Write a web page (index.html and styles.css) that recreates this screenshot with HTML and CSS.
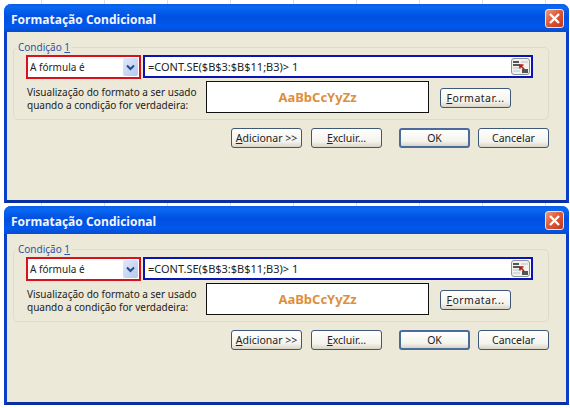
FILE: index.html
```html
<!DOCTYPE html>
<html lang="pt">
<head>
  <meta charset="UTF-8">
  <title>Formatação Condicional</title>
  <link rel="stylesheet" href="styles.css">
</head>
<body>

  <div class="window">
    <div class="title-bar">
      <span class="title">Formatação Condicional</span>
      <span class="close"><svg width="13" height="13" viewBox="0 0 13 13"><path d="M2 2 L11 11 M11 2 L2 11" stroke="#fff" stroke-width="2.4" fill="none"/></svg></span>
    </div>
    <div class="content">
      <fieldset class="group">
        <legend>Condição <u>1</u></legend>
        <div class="row">
          <div class="combo"><span class="combo-text">A fórmula é</span><span class="arrow"><svg width="9" height="7" viewBox="0 0 9 7"><path d="M1 1.5 L4.5 5 L8 1.5" stroke="#2b4a8c" stroke-width="2" fill="none"/></svg></span></div>
          <div class="formula"><span class="formula-text">=CONT.SE($B$3:$B$11;B3)&gt; 1</span><span class="ref-button"><svg width="17" height="13" viewBox="0 0 17 13"><path d="M1 2 H7 M1 5 H8 M10 10 H16 M10 12 H16" stroke="#222" stroke-width="1.6"/><path d="M9 2 H16 M1 8 H8 M1 11 H8" stroke="#b9c2cc" stroke-width="1"/><path d="M8 5 L12 9 M8 5 V8.5 M8 5 H11.5" stroke="#b01818" stroke-width="1.6" fill="none"/></svg></span></div>
        </div>
        <div class="row preview-row">
          <div class="preview-label">Visualização do formato a ser usado<br>quando a condição for verdadeira:</div>
          <div class="preview">AaBbCcYyZz</div>
          <button class="button format"><u>F</u>ormatar...</button>
        </div>
      </fieldset>
      <div class="actions">
        <button class="button"><u>A</u>dicionar &gt;&gt;</button>
        <button class="button"><u>E</u>xcluir...</button>
        <button class="button default ok">OK</button>
        <button class="button">Cancelar</button>
      </div>
    </div>
  </div>

  <div class="window">
    <div class="title-bar">
      <span class="title">Formatação Condicional</span>
      <span class="close"><svg width="13" height="13" viewBox="0 0 13 13"><path d="M2 2 L11 11 M11 2 L2 11" stroke="#fff" stroke-width="2.4" fill="none"/></svg></span>
    </div>
    <div class="content">
      <fieldset class="group">
        <legend>Condição <u>1</u></legend>
        <div class="row">
          <div class="combo"><span class="combo-text">A fórmula é</span><span class="arrow"><svg width="9" height="7" viewBox="0 0 9 7"><path d="M1 1.5 L4.5 5 L8 1.5" stroke="#2b4a8c" stroke-width="2" fill="none"/></svg></span></div>
          <div class="formula"><span class="formula-text">=CONT.SE($B$3:$B$11;B3)&gt; 1</span><span class="ref-button"><svg width="17" height="13" viewBox="0 0 17 13"><path d="M1 2 H7 M1 5 H8 M10 10 H16 M10 12 H16" stroke="#222" stroke-width="1.6"/><path d="M9 2 H16 M1 8 H8 M1 11 H8" stroke="#b9c2cc" stroke-width="1"/><path d="M8 5 L12 9 M8 5 V8.5 M8 5 H11.5" stroke="#b01818" stroke-width="1.6" fill="none"/></svg></span></div>
        </div>
        <div class="row preview-row">
          <div class="preview-label">Visualização do formato a ser usado<br>quando a condição for verdadeira:</div>
          <div class="preview">AaBbCcYyZz</div>
          <button class="button format"><u>F</u>ormatar...</button>
        </div>
      </fieldset>
      <div class="actions">
        <button class="button"><u>A</u>dicionar &gt;&gt;</button>
        <button class="button"><u>E</u>xcluir...</button>
        <button class="button default ok">OK</button>
        <button class="button">Cancelar</button>
      </div>
    </div>
  </div>

</body>
</html>
```

FILE: styles.css
```css
body {
  margin: 0;
  height: 408px;
  box-sizing: border-box;
  padding: 4px 0 0 4px;
  overflow: hidden;
  background-color: #fff;
  background-image: repeating-linear-gradient(90deg, #fff 0, #fff 41px, #dcdcdc 41px, #dcdcdc 42px, #fff 42px, #fff 63px);
  background-size: 100% 206px;
  background-repeat: no-repeat;
  font-family: "Noto Sans", sans-serif;
  font-size: 10px;
  color: #222;
}
.window {
  box-sizing: border-box;
  width: 565px;
  height: 199px;
  margin-bottom: 3px;
  border: 3px solid #0a3fc8;
  border-top: none;
  border-bottom-color: #0a2f9e;
  border-radius: 7px 7px 0 0;
  background-color: #ece9d8;
  display: flex;
  flex-direction: column;
}
.title-bar {
  height: 28px;
  margin: 0 -3px;
  padding: 0 5px 0 7px;
  flex-shrink: 0;
  border-radius: 7px 7px 0 0;
  background: linear-gradient(180deg, #0a5ee8 0, #0a68f2 12%, #0050e0 45%, #0058ee 80%, #0a4cc8 100%);
  display: flex;
  align-items: center;
  justify-content: space-between;
}
.title {
  margin-top: 3px;
  font-family: "Open Sans", sans-serif;
  font-weight: 700;
  font-size: 12px;
  color: #f2f6ff;
}
.close {
  width: 19px;
  height: 19px;
  box-sizing: border-box;
  border: 1px solid #f3e4dc;
  border-radius: 3px;
  background: linear-gradient(135deg, #ec9a80 0, #dd5a38 45%, #bf3a1c 100%);
  display: flex;
  align-items: center;
  justify-content: center;
}
.content {
  padding: 8px 17px 0 6px;
}
.group {
  margin: 0;
  padding: 1px 15px 0 12px;
  height: 80px;
  box-sizing: border-box;
  border: 1px solid #dedbcc;
  border-radius: 5px;
}
legend {
  margin-left: -10px;
  padding: 0 2px;
  line-height: 14px;
  color: #2a55a8;
}
.row {
  display: flex;
  gap: 2px;
}
.combo {
  box-sizing: border-box;
  width: 115px;
  height: 24px;
  padding: 0 1px 0 2px;
  border: 2px solid #d8121c;
  background-color: #fff;
  display: flex;
  align-items: center;
  justify-content: space-between;
}
.arrow {
  width: 15px;
  height: 18px;
  border-radius: 2px;
  background: linear-gradient(135deg, #dfe9fb, #b4c9ef);
  display: flex;
  align-items: center;
  justify-content: center;
}
.formula {
  box-sizing: border-box;
  width: 390px;
  height: 23px;
  padding: 0 1px 0 3px;
  border: 2px solid #0a14b4;
  background-color: #fff;
  font-size: 11px;
  display: flex;
  align-items: center;
  justify-content: space-between;
}
.ref-button {
  box-sizing: border-box;
  width: 19px;
  height: 17px;
  border: 1px solid #8a93a0;
  border-radius: 3px;
  background-color: #f3f2ea;
  display: flex;
  align-items: center;
  justify-content: center;
}
.preview-row {
  margin-top: 2px;
  gap: 0;
}
.preview-label {
  width: 180px;
  padding: 5px 0 0 1px;
  box-sizing: border-box;
  line-height: 13px;
  white-space: nowrap;
}
.preview {
  box-sizing: border-box;
  width: 223px;
  height: 32px;
  border: 1px solid #111;
  background-color: #fff;
  font-weight: 700;
  font-size: 13px;
  color: #dd8f3d;
  display: flex;
  align-items: center;
  justify-content: center;
}
.button {
  box-sizing: border-box;
  width: 71px;
  height: 20px;
  padding: 0;
  border: 1px solid #3d5878;
  border-radius: 3px;
  background: linear-gradient(180deg, #fff 0, #f4f3ec 70%, #d8d4c6 100%);
  font-family: "Noto Sans", sans-serif;
  font-size: 10.5px;
  color: #222;
}
.format {
  margin: 7px 0 0 11px;
  letter-spacing: 0.5px;
}
.default {
  border-width: 2px;
  border-color: #4a6c9c;
}
.actions {
  margin-top: 8px;
  display: flex;
  justify-content: flex-end;
  gap: 9px;
}
.actions .ok {
  margin-left: 8px;
  margin-right: -1px;
}
```
